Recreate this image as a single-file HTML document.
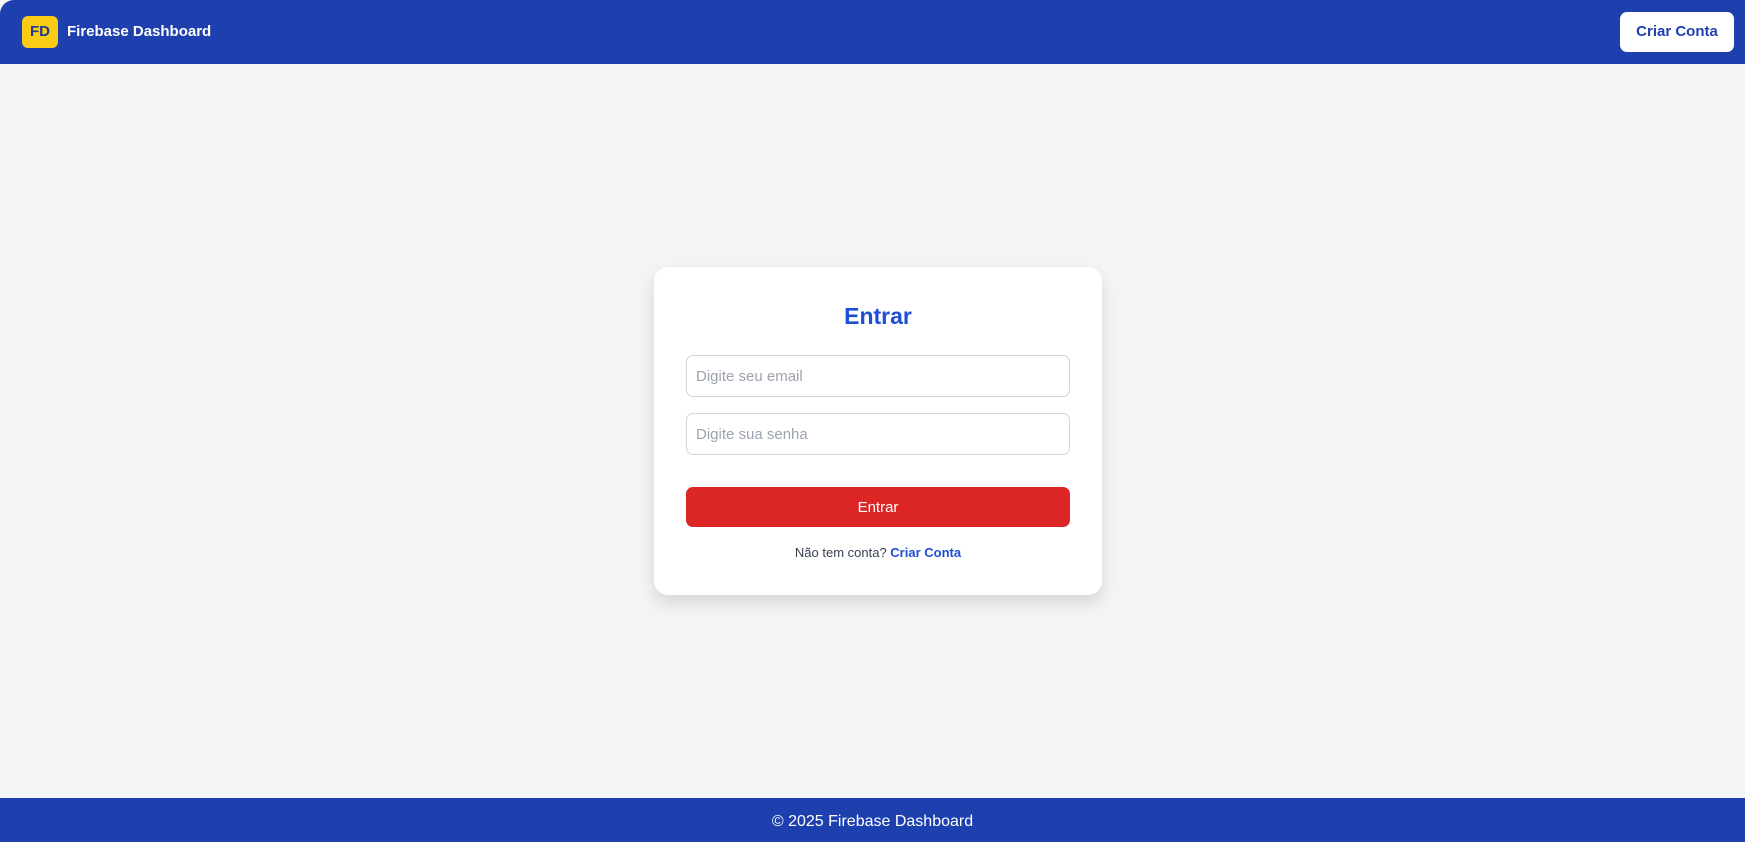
<!DOCTYPE html>
<html style="background:#f3f4f6"><head><style>
*{box-sizing:border-box;margin:0;padding:0}
html,body{width:1745px;height:842px;overflow:hidden}
body{background:#f3f4f6;font-family:"Liberation Sans",sans-serif;position:relative}
.hdr{position:absolute;left:0;top:0;width:1745px;height:64px;background:#1e40af;border-top-left-radius:14px}
.logo{position:absolute;left:22px;top:16px;width:36px;height:32px;background:#facc15;border-radius:6px;color:#1e3a8a;font-weight:bold;font-size:15px;text-align:center;line-height:32px}
.title{position:absolute;left:67px;top:23px;color:#fff;font-weight:bold;font-size:15px}
.btn1{position:absolute;left:1620px;top:12px;width:114px;height:40px;background:#fff;border-radius:7px;color:#1e40af;font-weight:bold;font-size:15px;text-align:center;line-height:40px}
.card{position:absolute;left:654px;top:267px;width:448px;height:328px;background:#fff;border-radius:14px;box-shadow:0 8px 16px rgba(0,0,0,.12)}
h1{position:absolute;left:0;width:448px;top:36px;text-align:center;color:#1d4ed8;font-size:23px;font-weight:bold}
.in{position:absolute;left:32px;width:384px;height:42px;border:1px solid #d1d5db;border-radius:7px;color:#9ca3af;font-size:15px;padding-left:9px;line-height:42px}
.sub{position:absolute;left:32px;top:220px;width:384px;height:40px;background:#dc2626;border-radius:7px;color:#fff;font-size:15px;text-align:center;line-height:41px}
.lk{position:absolute;left:0;width:448px;top:278px;text-align:center;font-size:13px;color:#374151}
.lk b{color:#1d4ed8}
.ftr{position:absolute;left:0;bottom:0;width:1745px;height:44px;background:#1e40af;color:#fff;font-size:16px;text-align:center;line-height:48px}
</style></head><body>
<div class="hdr"><div class="logo">FD</div><div class="title">Firebase Dashboard</div><div class="btn1">Criar Conta</div></div>
<div class="card"><h1>Entrar</h1>
<div class="in" style="top:88px">Digite seu email</div>
<div class="in" style="top:146px">Digite sua senha</div>
<div class="sub">Entrar</div>
<div class="lk">Não tem conta? <b>Criar Conta</b></div></div>
<div class="ftr">© 2025 Firebase Dashboard</div>
</body></html>
